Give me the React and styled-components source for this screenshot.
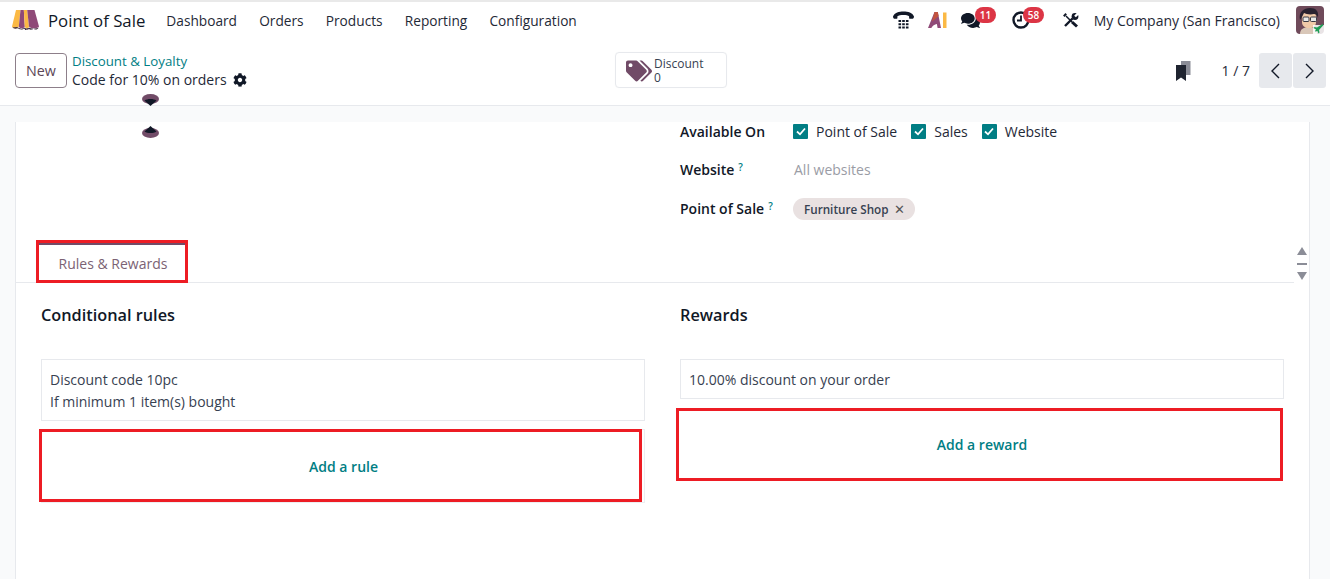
import React from "react";
import styled, { createGlobalStyle } from "styled-components";
import { FaCog, FaComments, FaTags } from "react-icons/fa";

const GlobalStyle = createGlobalStyle`
  html, body {
    margin: 0;
    padding: 0;
    background: #f9fafb;
  }
  body {
    font-family: "Open Sans", "Noto Sans", sans-serif;
    font-size: 14px;
    color: #374151;
  }
  * {
    box-sizing: border-box;
  }
`;

const navItems = ["Dashboard", "Orders", "Products", "Reporting", "Configuration"];
const channels = ["Point of Sale", "Sales", "Website"];

const LogoIcon = () => (
  <svg width="27" height="20" viewBox="0 0 27 20">
    <path d="M4 0h4.500L6.800 16.500c-.8 2.400-6.400 2.400-6.800 0z" fill="#fbb945" />
    <path d="M8.500 0h3.300L12.800 16.500c-.4 2.400-5.600 2.400-6 0z" fill="#8f4a78" />
    <path d="M11.800 0h3.400l1.800 16.500c-.4 2.400-3.800 2.400-4.200 0z" fill="#fbb945" />
    <path d="M15.200 0H22.500L27 16.500c-.4 2.400-9.600 2.400-10 0z" fill="#8f4a78" />
    <path d="M.5 17.500c1 1.500 5 1.500 6 0 1 1.500 5 1.500 6 0 .6 1.200 3.800 1.200 4.500 0 1 1.500 8.500 1.500 9.500 0-.6 2.500-4 2.500-5 1-1 1.500-3.500 1.500-4.500.5-1 1-4 1-5-.5-1 1.500-5.800 1.500-6.500-1.500z" fill="#3c2a3a" />
  </svg>
);

const PhoneIcon = () => (
  <svg width="21" height="19" viewBox="0 0 21 19" fill="#111827">
    <path d="M0 5.500C1.500 1.500 6 .5 10.500.5s9 1 10.500 5c0 1.200-.6 2.300-1.300 2.300h-2.900c-.7 0-.8-1.200-.7-2.600C14.200 3.600 6.800 3.600 4.400 5.200c.1 1.400 0 2.600-.7 2.600H1.300C.6 7.800 0 6.700 0 5.500z" />
    <path d="M5.500 9h2.600v2H5.500zM9.200 9h2.600v2H9.200zM12.900 9h2.600v2h-2.600zM5.500 12.300h2.600v2H5.500zM9.200 12.300h2.600v2H9.200zM12.900 12.300h2.600v2h-2.600zM5.500 15.600h2.600v2H5.500zM9.200 15.600h2.600v2H9.200zM12.900 15.600h2.600v2h-2.600z" />
  </svg>
);

const AiIcon = () => (
  <svg width="19" height="16" viewBox="0 0 19 16">
    <path d="M6.500 0h3.300L13 16H9.600L8.900 12C6.500 12.300 4.600 13.800 3.300 16H0z" fill="#8f4a78" />
    <path d="M6.500 0h3.300l.8 4-3 2.700L4 9.500z" fill="#c2543f" />
    <path d="M15 .5h3.500V16H15z" fill="#fbb945" />
  </svg>
);

const ClockIcon = () => (
  <svg width="18" height="18" viewBox="0 0 18 18" fill="none" stroke="#111827">
    <circle cx="9" cy="9" r="7.500" strokeWidth="2.400" />
    <path d="M9 4.500v5H5" strokeWidth="1.800" />
  </svg>
);

const ToolsIcon = () => (
  <svg width="16" height="15" viewBox="0 0 16 15" fill="none" stroke="#111827">
    <path d="M3 3l6 6" strokeWidth="1.500" />
    <path d="M9 9l5 4.500" strokeWidth="3" />
    <path d="M.8 3.200 3.200.8" strokeWidth="2" />
    <path d="M2 13 9.500 5.500" strokeWidth="2.400" />
    <circle cx="12" cy="3.500" r="3.400" fill="#111827" stroke="none" />
    <path d="M12 3.500 15.500 0" stroke="#fff" strokeWidth="2.400" />
  </svg>
);

const BookmarkIcon = () => (
  <svg width="15" height="20" viewBox="0 0 15 20">
    <path d="M5 0h9.500v14H5z" fill="#8b8d97" />
    <path d="M0 4h10v16l-5-3.500L0 20z" fill="#1f2430" />
  </svg>
);

const ChevronLeft = () => (
  <svg width="11" height="16" viewBox="0 0 11 16" fill="none" stroke="#111827" strokeWidth="1.400">
    <path d="M9 1 2 8l7 7" />
  </svg>
);

const ChevronRight = () => (
  <svg width="11" height="16" viewBox="0 0 11 16" fill="none" stroke="#111827" strokeWidth="1.400">
    <path d="m2 1 7 7-7 7" />
  </svg>
);

const Avatar = () => (
  <svg width="28" height="28" viewBox="0 0 28 28">
    <rect width="28" height="28" rx="4" fill="#6f4a5a" />
    <path d="M4 28c0-5 4-7 9-7s8 2 8 7z" fill="#d9c7b8" />
    <path d="M6 11c0-5 3-6 7-6s7 1 7 6v5c0 4-3 6-7 6s-7-2-7-6z" fill="#f0c9a8" />
    <path d="M4 14C2 6 8 2 14 2c6 0 9 3 8 10-1-3-2-4-4-4-4 1-8 0-10-1-1 2-2 4-4 7z" fill="#2a2230" />
    <rect x="7" y="11" width="6" height="4.500" rx="1" fill="#e8e8e8" stroke="#3a3a44" />
    <rect x="14.500" y="11" width="6" height="4.500" rx="1" fill="#e8e8e8" stroke="#3a3a44" />
    <path d="M17 28v-9h11v9z" fill="#fff" opacity="0.85" />
    <path d="M26.500 18 21 21.500l-2.500-.5-1 1 2.500 1.500-1 1.500.8.8 1.500-1L22.500 27.500l1-1-.5-2.500L27.500 19z" fill="#1f9d55" />
  </svg>
);

const CheckMark = () => (
  <svg width="10" height="9" viewBox="0 0 10 9" fill="none" stroke="#fff" strokeWidth="1.800">
    <path d="m1 4.500 3 2.800L9 1.500" />
  </svg>
);

const DropDown = () => (
  <svg width="17" height="12" viewBox="0 0 17 12">
    <ellipse cx="8.500" cy="5" rx="8.500" ry="5" fill="#714b67" />
    <path d="M2.500 6.500c3-2 9-2 12 0L8.500 12z" fill="#111827" />
  </svg>
);

const DropUp = () => (
  <svg width="17" height="12" viewBox="0 0 17 12">
    <ellipse cx="8.500" cy="7" rx="8.500" ry="5" fill="#714b67" />
    <path d="M2.500 5.500c3 2 9 2 12 0L8.500 0z" fill="#111827" />
  </svg>
);

const App = () => {
  return (
    <Page>
      <GlobalStyle />
      <NavBar>
        <Brand>
          <LogoIcon />
          <BrandName>Point of Sale</BrandName>
        </Brand>
        <NavMenu>
          {navItems.map((item) => (
            <NavItem key={item}>{item}</NavItem>
          ))}
        </NavMenu>
        <Systray>
          <TrayIcon $w={35}>
            <PhoneIcon />
          </TrayIcon>
          <TrayIcon $w={33}>
            <AiIcon />
          </TrayIcon>
          <TrayIcon $w={51}>
            <FaComments size={19} color="#111827" />
            <Badge $left={14}>11</Badge>
          </TrayIcon>
          <TrayIcon $w={51}>
            <ClockIcon />
            <Badge $left={11}>58</Badge>
          </TrayIcon>
          <TrayIcon $w={31}>
            <ToolsIcon />
          </TrayIcon>
          <CompanyName>My Company (San Francisco)</CompanyName>
          <AvatarBox>
            <Avatar />
          </AvatarBox>
        </Systray>
      </NavBar>

      <ControlPanel>
        <Breadcrumb>
          <NewButton>New</NewButton>
          <Crumbs>
            <CrumbLink>Discount &amp; Loyalty</CrumbLink>
            <CrumbTitle>
              Code for 10% on orders
              <FaCog size={14} color="#111827" />
            </CrumbTitle>
          </Crumbs>
        </Breadcrumb>
        <StatButton>
          <FaTags size={26} color="#714b67" />
          <StatText>
            <span>Discount</span>
            <span>0</span>
          </StatText>
        </StatButton>
        <Pager>
          <BookmarkIcon />
          <PagerCount>1 / 7</PagerCount>
          <PagerButtons>
            <PagerButton>
              <ChevronLeft />
            </PagerButton>
            <PagerButton>
              <ChevronRight />
            </PagerButton>
          </PagerButtons>
        </Pager>
        <HandleTop>
          <DropDown />
        </HandleTop>
      </ControlPanel>

      <Sheet>
        <HandleBottom>
          <DropUp />
        </HandleBottom>
        <FieldGroup>
          <FieldRow>
            <FieldLabel>Available On</FieldLabel>
            <Checks>
              {channels.map((name) => (
                <CheckItem key={name}>
                  <CheckBox>
                    <CheckMark />
                  </CheckBox>
                  {name}
                </CheckItem>
              ))}
            </Checks>
          </FieldRow>
          <FieldRow>
            <FieldLabel>
              Website<Help>?</Help>
            </FieldLabel>
            <Placeholder>All websites</Placeholder>
          </FieldRow>
          <FieldRow>
            <FieldLabel>
              Point of Sale<Help>?</Help>
            </FieldLabel>
            <Tag>
              Furniture Shop <TagClose>✕</TagClose>
            </Tag>
          </FieldRow>
        </FieldGroup>

        <TabStrip>
          <Tab>Rules &amp; Rewards</Tab>
          <Scroller>
            <ArrowUp />
            <Dash />
            <ArrowDown />
          </Scroller>
        </TabStrip>

        <Columns>
          <Column>
            <Heading>Conditional rules</Heading>
            <Card>
              <div>Discount code 10pc</div>
              <div>If minimum 1 item(s) bought</div>
            </Card>
            <AddCard>
              <AddBox $width={603} $shift={-2} $top={-1} $padLeft={6} $padTop={2}>
                Add a rule
              </AddBox>
            </AddCard>
          </Column>
          <Column>
            <Heading>Rewards</Heading>
            <Card>10.00% discount on your order</Card>
            <AddBox $width={607} $shift={-4} $top={9} $padLeft={5} $padTop={0}>
              Add a reward
            </AddBox>
          </Column>
        </Columns>
      </Sheet>
    </Page>
  );
};
export default App;

const Page = styled.div`
  position: relative;
  width: 1330px;
  height: 579px;
  overflow: hidden;
  border-top: 2px solid #e9e9e9;
`;

const NavBar = styled.div`
  display: flex;
  align-items: center;
  height: 38px;
  background: #fff;
  padding: 0 6px 2px 12px;
`;

const Brand = styled.div`
  display: flex;
  align-items: center;
  gap: 9px;
`;

const BrandName = styled.span`
  font-size: 16.800px;
  color: #111827;
`;

const NavMenu = styled.div`
  display: flex;
  gap: 22.200px;
  margin-left: 21px;
`;

const NavItem = styled.span`
  font-size: 13.700px;
  color: #1f2937;
`;

const Systray = styled.div`
  display: flex;
  align-items: center;
  margin-left: auto;
`;

const TrayIcon = styled.div`
  position: relative;
  display: flex;
  align-items: center;
  width: ${(props) => props.$w}px;
`;

const Badge = styled.span`
  position: absolute;
  top: -4px;
  left: ${(props) => props.$left}px;
  min-width: 21px;
  height: 16px;
  padding: 0 5px;
  border-radius: 8px;
  background: #dc3545;
  color: #fff;
  font-size: 10px;
  font-weight: 600;
  line-height: 16px;
  text-align: center;
`;

const CompanyName = styled.span`
  font-size: 14px;
  color: #1f2937;
`;

const AvatarBox = styled.div`
  display: flex;
  margin-left: 16px;
`;

const ControlPanel = styled.div`
  position: relative;
  display: flex;
  align-items: center;
  height: 66px;
  padding: 0 4px 4px 15px;
  background: #fff;
  border-bottom: 1px solid #e7e9ed;
`;

const Breadcrumb = styled.div`
  display: flex;
  align-items: center;
  gap: 5px;
  width: 600px;
`;

const NewButton = styled.button`
  width: 52px;
  height: 35px;
  padding: 0;
  background: #fff;
  border: 1px solid #8d7f8a;
  border-radius: 4px;
  color: #5c4757;
  font-family: inherit;
  font-size: 14.300px;
`;

const Crumbs = styled.div`
  display: flex;
  flex-direction: column;
  margin-top: -1px;
  line-height: 18px;
`;

const CrumbLink = styled.span`
  margin-bottom: 1px;
  color: #017e84;
  font-size: 13.300px;
`;

const CrumbTitle = styled.span`
  display: flex;
  align-items: center;
  gap: 6px;
  color: #1f2937;
  font-size: 14px;
`;

const StatButton = styled.div`
  display: flex;
  align-items: center;
  gap: 2px;
  width: 112px;
  height: 36px;
  margin-top: -2px;
  padding: 2px 0 0 10px;
  border: 1px solid #e7e9ed;
  border-radius: 4px;
  box-shadow: 0 0 1px rgba(0, 0, 0, 0.05);
`;

const StatText = styled.div`
  display: flex;
  flex-direction: column;
  font-size: 12px;
  line-height: 14px;
  color: #374151;
`;

const Pager = styled.div`
  display: flex;
  align-items: center;
  margin-left: auto;
`;

const PagerCount = styled.span`
  margin: 0 9px 0 31px;
  font-size: 14px;
  color: #1f2937;
`;

const PagerButtons = styled.div`
  display: flex;
  gap: 1px;
`;

const PagerButton = styled.div`
  display: flex;
  align-items: center;
  justify-content: center;
  width: 33px;
  height: 35px;
  background: #e7e9ed;
  border-radius: 3px;
`;

const HandleTop = styled.div`
  position: absolute;
  left: 142px;
  bottom: -1px;
  display: flex;
`;

const Sheet = styled.div`
  position: relative;
  display: flow-root;
  width: 1295px;
  height: 480px;
  margin: 16px 0 0 15px;
  background: #fff;
  border-left: 1px solid #e7e9ed;
  border-right: 1px solid #e7e9ed;
`;

const HandleBottom = styled.div`
  position: absolute;
  left: 126px;
  top: 4px;
  display: flex;
`;

const FieldGroup = styled.div`
  display: flex;
  flex-direction: column;
  gap: 18.500px;
  height: 119px;
  padding-left: 664px;
  margin-top: -1px;
`;

const FieldRow = styled.div`
  display: flex;
  align-items: center;
  height: 20px;
`;

const FieldLabel = styled.div`
  width: 113px;
  font-weight: 600;
  color: #111827;
`;

const Help = styled.sup`
  margin-left: 4px;
  color: #017e84;
  font-size: 10px;
  font-weight: 600;
  vertical-align: 4px;
  line-height: 0;
`;

const Checks = styled.div`
  display: flex;
  gap: 14px;
`;

const CheckItem = styled.div`
  display: flex;
  align-items: center;
  gap: 8px;
  color: #1f2937;
`;

const CheckBox = styled.span`
  display: flex;
  align-items: center;
  justify-content: center;
  width: 15px;
  height: 15px;
  background: #017e84;
  border-radius: 1px;
`;

const Placeholder = styled.span`
  padding-left: 1px;
  color: #9a9ca5;
`;

const Tag = styled.span`
  display: flex;
  align-items: center;
  gap: 5px;
  height: 22px;
  margin-top: 1px;
  padding: 0 10px 0 11px;
  background: #e9e1e1;
  border-radius: 11px;
  font-size: 11.700px;
  font-weight: 600;
  color: #374151;
`;

const TagClose = styled.span`
  font-size: 13px;
  font-weight: 400;
  color: #555;
`;

const TabStrip = styled.div`
  position: relative;
  display: flex;
  align-items: flex-end;
  justify-content: space-between;
  height: 43px;
  margin-right: 15px;
  padding-left: 20px;
  border-bottom: 1px solid #e7e9ed;
`;

const Tab = styled.div`
  display: flex;
  align-items: center;
  justify-content: center;
  width: 152px;
  height: 43px;
  margin-bottom: -1px;
  padding: 3px 0 0 2px;
  border: 3px solid #ed1c24;
  background: #fff;
  box-shadow: inset 0 2px 0 #714b67;
  color: #7b6274;
  font-size: 14px;
`;

const Scroller = styled.div`
  position: absolute;
  right: -14px;
  top: 6px;
  display: flex;
  flex-direction: column;
  align-items: center;
  justify-content: space-between;
  width: 13px;
  height: 35px;
  padding: 1px 0;
`;

const ArrowUp = styled.span`
  width: 0;
  height: 0;
  border-left: 5.500px solid transparent;
  border-right: 5.500px solid transparent;
  border-bottom: 8px solid #8b8d97;
`;

const ArrowDown = styled.span`
  width: 0;
  height: 0;
  border-left: 5.500px solid transparent;
  border-right: 5.500px solid transparent;
  border-top: 8px solid #8b8d97;
`;

const Dash = styled.span`
  width: 10px;
  height: 2px;
  background: #8b8d97;
`;

const Columns = styled.div`
  display: grid;
  grid-template-columns: 604px 604px;
  gap: 35px;
  padding: 20px 0 0 25px;
`;

const Column = styled.div`
  display: flex;
  flex-direction: column;
`;

const Heading = styled.h3`
  height: 24px;
  margin: 0 0 32px;
  font-size: 16.300px;
  font-weight: 600;
  line-height: 24px;
  color: #111827;
`;

const Card = styled.div`
  padding: 9px 8px 7px;
  border: 1px solid #e7e9ed;
  line-height: 22px;
  color: #374151;
`;

const AddCard = styled.div`
  height: 74px;
  margin-top: 8px;
  border: 1px solid #eceef1;
  border-left: none;
`;

const AddBox = styled.div`
  display: flex;
  align-items: center;
  justify-content: center;
  flex: none;
  width: ${(props) => props.$width}px;
  height: 73px;
  margin-left: ${(props) => props.$shift}px;
  margin-top: ${(props) => props.$top}px;
  padding-left: ${(props) => props.$padLeft}px;
  padding-top: ${(props) => props.$padTop}px;
  border: 3px solid #ed1c24;
  color: #017e84;
  font-weight: 600;
`;
